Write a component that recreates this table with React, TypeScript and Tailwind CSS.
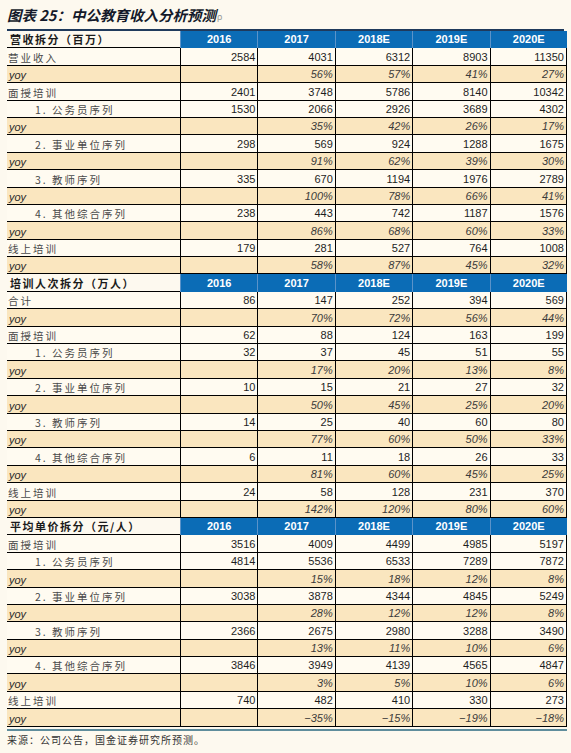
import React from 'react'

type Row = { label: string; values: string[]; yoy?: boolean; indent?: boolean }
type Section = { title: string; rows: Row[] }

const years = ['2016', '2017', '2018E', '2019E', '2020E']

const y = (...v: string[]): Row => ({ label: 'yoy', values: ['', ...v], yoy: true })
const r = (label: string, values: string[], indent = false): Row => ({ label, values, indent })

const sections: Section[] = [
  {
    title: '营收拆分（百万）',
    rows: [
      r('营业收入', ['2584', '4031', '6312', '8903', '11350']),
      y('56%', '57%', '41%', '27%'),
      r('面授培训', ['2401', '3748', '5786', '8140', '10342']),
      r('1. 公务员序列', ['1530', '2066', '2926', '3689', '4302'], true),
      y('35%', '42%', '26%', '17%'),
      r('2. 事业单位序列', ['298', '569', '924', '1288', '1675'], true),
      y('91%', '62%', '39%', '30%'),
      r('3. 教师序列', ['335', '670', '1194', '1976', '2789'], true),
      y('100%', '78%', '66%', '41%'),
      r('4. 其他综合序列', ['238', '443', '742', '1187', '1576'], true),
      y('86%', '68%', '60%', '33%'),
      r('线上培训', ['179', '281', '527', '764', '1008']),
      y('58%', '87%', '45%', '32%'),
    ],
  },
  {
    title: '培训人次拆分（万人）',
    rows: [
      r('合计', ['86', '147', '252', '394', '569']),
      y('70%', '72%', '56%', '44%'),
      r('面授培训', ['62', '88', '124', '163', '199']),
      r('1. 公务员序列', ['32', '37', '45', '51', '55'], true),
      y('17%', '20%', '13%', '8%'),
      r('2. 事业单位序列', ['10', '15', '21', '27', '32'], true),
      y('50%', '45%', '25%', '20%'),
      r('3. 教师序列', ['14', '25', '40', '60', '80'], true),
      y('77%', '60%', '50%', '33%'),
      r('4. 其他综合序列', ['6', '11', '18', '26', '33'], true),
      y('81%', '60%', '45%', '25%'),
      r('线上培训', ['24', '58', '128', '231', '370']),
      y('142%', '120%', '80%', '60%'),
    ],
  },
  {
    title: '平均单价拆分（元/人）',
    rows: [
      r('面授培训', ['3516', '4009', '4499', '4985', '5197']),
      r('1. 公务员序列', ['4814', '5536', '6533', '7289', '7872'], true),
      y('15%', '18%', '12%', '8%'),
      r('2. 事业单位序列', ['3038', '3878', '4344', '4845', '5249'], true),
      y('28%', '12%', '12%', '8%'),
      r('3. 教师序列', ['2366', '2675', '2980', '3288', '3490'], true),
      y('13%', '11%', '10%', '6%'),
      r('4. 其他综合序列', ['3846', '3949', '4139', '4565', '4847'], true),
      y('3%', '5%', '10%', '6%'),
      r('线上培训', ['740', '482', '410', '330', '273']),
      y('−35%', '−15%', '−19%', '−18%'),
    ],
  },
]

const cjk = "font-['Noto_Sans_CJK_SC','Liberation_Sans',sans-serif]"
const num = "font-['Liberation_Sans','Noto_Sans_CJK_SC',sans-serif]"

const HeaderRow = ({ title }: { title: string }) => (
  <div className="flex h-[17.4px]">
    <div
      className={`flex w-[173px] items-end border-b border-black bg-[#fdf9ef] pl-[3px] text-[11px] leading-[15px] font-bold tracking-[1.5px] text-[#1b1b1b] ${cjk}`}
    >
      {title}
    </div>
    {years.map(yr => (
      <div
        key={yr}
        className={`flex w-[77.4px] items-center justify-center border-l border-[#5b93c9] bg-[#0b6cb6] text-[11px] font-bold text-white ${num}`}
      >
        {yr}
      </div>
    ))}
  </div>
)

const DataRow = ({ row }: { row: Row }) => {
  const bg = row.yoy ? 'bg-[#fae6bf]' : 'bg-[#fffbf1]'
  return (
    <div className={`flex h-[17.4px] border-b border-black ${bg}`}>
      {row.yoy ? (
        <div className={`flex w-[173px] items-end pl-[2px] text-[11px] leading-[13px] italic text-[#2a2a2a] ${num}`}>
          yoy
        </div>
      ) : (
        <div
          className={`flex w-[173px] items-end text-[10.5px] leading-[15px] tracking-[2px] text-[#4a4a4a] ${cjk} ${
            row.indent ? 'pl-[28px]' : 'pl-[1px]'
          }`}
        >
          {row.label}
        </div>
      )}
      {row.values.map((v, i) => (
        <div
          key={i}
          className={`flex w-[77.4px] items-end justify-end border-l border-black pr-[2px] text-[11px] leading-[15px] text-[#1e1e1e] ${num} ${
            row.yoy ? 'italic text-[#3a3a3a]' : ''
          } ${i === 4 ? 'border-r' : ''}`}
        >
          {v}
        </div>
      ))}
    </div>
  )
}

export default function App() {
  return (
    <div className="h-[753px] w-[571px] overflow-hidden bg-[#fdf9ef]">
      <div className="px-[7px]">
        <div className="flex h-[31px] items-end border-b-2 border-[#1f3a5c] pb-[5px]">
          <span className={`text-[14.5px] leading-[18px] font-bold italic text-[#141a2a] ${cjk}`}>
            图表 25：中公教育收入分析预测
          </span>
          <span className="ml-[1px] text-[9px] leading-[14px] text-[#999]">ρ</span>
        </div>
        <div className="w-[560px]">
          {sections.map(s => (
            <div key={s.title}>
              <HeaderRow title={s.title} />
              {s.rows.map((row, i) => (
                <DataRow key={i} row={row} />
              ))}
            </div>
          ))}
        </div>
        <div className="mt-[2px] h-[2px] w-[560px] bg-[#5f8d9c]" />
        <div className={`mt-[2px] text-[10px] leading-[14px] tracking-[1px] text-[#333] ${cjk}`}>
          来源：公司公告，国金证券研究所预测。
        </div>
      </div>
    </div>
  )
}
